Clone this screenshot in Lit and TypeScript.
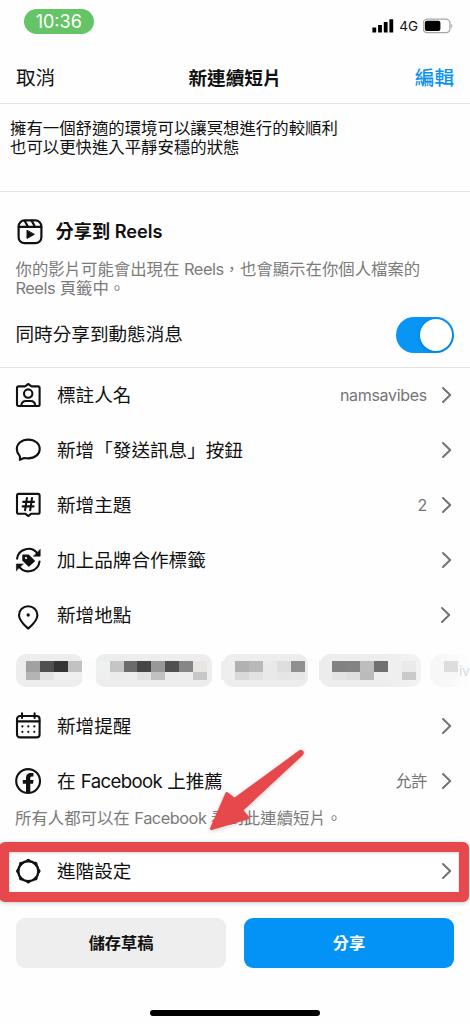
import { LitElement, html, css, svg } from "lit";
import { customElement, property } from "lit/decorators.js";

const icons: Record<string, unknown> = {
  reels: svg`<rect x="2.6" y="2.4" width="22.8" height="22.8" rx="6"/><path d="M2.8 8.9H25.2M8.6 2.8L12 8.8M15.6 2.6L19 8.8"/><path d="M11 12.6V20.4L18 16.5Z" fill="currentColor" stroke-width="1"/>`,
  tag: svg`<path d="M4.6 5.4H10.8C12.3 5.4 12.8 3.4 14.3 3.1C15.8 3.4 16.3 5.4 17.8 5.4H24Q25.6 5.4 25.6 7V23.4Q25.6 25 24 25H4.6Q3 25 3 23.4V7Q3 5.4 4.6 5.4Z"/><circle cx="14.2" cy="12.6" r="4.2"/><path d="M7.3 24.6C7.5 21.6 9.2 20 12 20H16.6C19.4 20 21.1 21.6 21.3 24.6"/>`,
  message: svg`<path d="M5.3 19.2C3.7 17.6 2.8 15.4 2.8 13C2.8 7.6 7.8 3.6 14.3 3.6C20.8 3.6 25.7 7.6 25.7 12.9C25.7 18.3 20.8 22.4 14.3 22.4C12.8 22.4 11.4 22.3 10.2 22L5.8 23.8Q6.6 21 5.3 19.2Z"/>`,
  topic: svg`<path d="M4.6 2.9H24Q25.6 2.9 25.6 4.5V21.2Q25.6 22.8 24 22.8H17.4C16.2 22.8 15.7 24.7 14.3 24.9C12.9 24.7 12.4 22.8 11.2 22.8H4.6Q3 22.8 3 21.2V4.5Q3 2.9 4.6 2.9Z"/><path d="M12.9 7.1L11.1 19.2M18 7.1L16.2 19.2M9.2 10.9H20M8.7 15.4H19.5"/>`,
  brand: svg`<path d="M3.1 12.6A11.3 11.3 0 0 1 23.6 7.8M25.5 15.6A11.3 11.3 0 0 1 5 20.4"/><path d="M26.2 3.6V10.2H19.6ZM2.4 24.6V18H9Z" fill="currentColor" stroke-width="0.6"/><path fill="currentColor" stroke-width="1.2" fill-rule="evenodd" d="M8.9 9.2L14.6 9.2L20.3 15L14.8 20L8.9 14.4ZM10.8 12a1.2 1.2 0 1 0 2.4 0a1.2 1.2 0 1 0-2.4 0Z"/><circle cx="12" cy="12" r="1.1" fill="#fff" stroke="none"/>`,
  place: svg`<path d="M14.2 27.6C11.6 25.2 5 19.8 5 14.2A9.2 9 0 0 1 23.4 14.2C23.4 19.8 16.8 25.2 14.2 27.6Z"/><circle cx="14.2" cy="14" r="1.7" fill="currentColor" stroke="none"/>`,
  calendar: svg`<rect x="3" y="4" width="22.6" height="21.4" rx="3"/><path d="M3.2 9.4H25.4M8 1.4V6M20.6 1.4V6"/><path stroke-width="2.2" d="M8.4 14.4h.01M14.3 14.4h.01M20.3 14.4h.01M8.4 19.8h.01M14.3 19.8h.01M20.3 19.8h.01"/>`,
  facebook: svg`<circle cx="14.1" cy="14" r="11.9"/><path fill="currentColor" stroke="none" d="M12 26V16.8H8.8V13.1H12V11.2C12 7.6 13.9 6 17 6C18 6 18.8 6.1 19.5 6.2V9.4H17.9C16.6 9.4 16.3 10.1 16.3 11.3V13.1H19.6L19 16.8H16.3V26Z"/>`,
  gear: svg`<circle cx="14.3" cy="14.2" r="10" stroke-width="2.3"/><g fill="currentColor" stroke="none">${[0, 45, 90, 135, 180, 225, 270, 315].map(
    (a) => svg`<path transform="rotate(${a} 14.3 14.2)" d="M9.8 5.2Q12 4.4 12.7 2.6Q14.3 1 15.9 2.6Q16.6 4.4 18.8 5.2Z"/>`
  )}</g>`,
};

const icon = (name: string) => html`<svg class="icon" viewBox="0 0 28 28" width="28" height="28">${icons[name]}</svg>`;

// Latin words sit slightly tighter than the surrounding Han text.
const mixed = (text: string) =>
  text.split(/([A-Za-z]+)/).map((part) => (/^[A-Za-z]/.test(part) ? html`<span class="latin">${part}</span>` : part));

@customElement("setting-row")
class SettingRow extends LitElement {
  @property() icon = "";
  @property() label = "";
  @property() value = "";

  static styles = css`
    :host {
      display: flex;
      align-items: center;
      height: 55.1px;
      padding: 0 18px 0 14px;
      box-sizing: border-box;
      color: #111;
    }
    .icon {
      flex: none;
      overflow: visible;
      fill: none;
      stroke: currentColor;
      stroke-width: 2.1;
      stroke-linecap: round;
      stroke-linejoin: round;
    }
    .label {
      flex: 1;
      margin-left: 15px;
      font-size: 18.6px;
      line-height: 28px;
      white-space: nowrap;
    }
    .latin { letter-spacing: -0.65px; }
    .value {
      font-size: 16px;
      line-height: 24px;
      letter-spacing: -0.3px;
      color: #757575;
      margin-right: 14px;
    }
    .chevron {
      flex: none;
      fill: none;
      stroke: #737373;
      stroke-width: 2;
      stroke-linecap: round;
      stroke-linejoin: round;
    }
  `;

  render() {
    return html`
      ${icon(this.icon)}
      <span class="label">${mixed(this.label)}</span>
      ${this.value ? html`<span class="value">${this.value}</span>` : ""}
      <svg class="chevron" viewBox="0 0 11 18" width="11" height="18"><path d="M2 2L9.2 9L2 16" /></svg>
    `;
  }
}

// Each entry: column index, upper shade, lower shade.
const mosaic: [number, string, string][] = [
  [0, "#a0a2a1", "#b4b4b4"], [1, "#505050", "#e3e3e3"], [2, "#353535", "#eeefef"], [3, "#c1c3c2", "#eeefef"],
  [4, "#fcfcfc", "#fcfcfc"], [5, "#eff1f1", "#efefef"], [6, "#c4c6c5", "#ebebeb"], [7, "#6b6b6b", "#ededed"],
  [8, "#464646", "#e2e2e2"], [9, "#989898", "#c1c1c1"], [10, "#505050", "#ebebeb"], [11, "#868686", "#ededed"],
  [12, "#e7e6e2", "#c7c7c7"], [14, "#eeeeee", "#eeeeee"], [15, "#b1b1b1", "#d9d9d9"], [16, "#b9b9b9", "#e2e2e2"],
  [17, "#e9e9e9", "#e9e9e9"], [18, "#dedede", "#e5e5e5"], [19, "#8e9190", "#e6e6e6"], [21, "#ececec", "#ececec"],
  [22, "#818181", "#e3e3e3"], [23, "#838383", "#dfdfdf"], [24, "#bdbdbd", "#bbbbbb"], [25, "#707070", "#eeeeee"],
  [26, "#efefef", "#efefef"], [27, "#eaeaea", "#cacaca"], [29, "#f6f8f7", "#f6f8f7"], [30, "#dddddd", "#f7f7f7"],
];

@customElement("app-root")
class AppRoot extends LitElement {
  static styles = css`
    :host {
      display: flex;
      flex-direction: column;
      position: relative;
      width: 470px;
      height: 1024px;
      overflow: hidden;
      box-sizing: border-box;
      background: #fefefe;
      color: #111;
      font-family: Inter, "Noto Sans CJK TC", sans-serif;
    }
    .status {
      display: flex;
      justify-content: space-between;
      height: 52px;
      padding: 9px 16px 0 24px;
      box-sizing: border-box;
    }
    .time {
      width: 69.5px;
      height: 25px;
      border-radius: 13px;
      background: #65c466;
      color: #fff;
      font-size: 18px;
      line-height: 25px;
      text-align: center;
    }
    .signals {
      display: flex;
      align-items: center;
      height: 34px;
      font-size: 13.5px;
      gap: 5px;
    }
    .header {
      display: grid;
      grid-template-columns: 1fr auto 1fr;
      align-items: center;
      height: 52px;
      padding: 0 16px;
      box-sizing: border-box;
      border-bottom: 1px solid #e3e3e3;
      font-size: 19.6px;
      line-height: 28px;
    }
    .title { font-size: 18.6px; font-weight: 700; }
    .edit { color: #0c92f2; font-weight: 500; text-align: right; }
    .caption {
      height: 87.5px;
      padding: 15px 10px 0;
      box-sizing: border-box;
      border-bottom: 1px solid #e3e3e3;
      font-size: 16.4px;
      line-height: 19px;
    }
    .share {
      display: flex;
      flex-direction: column;
      height: 176px;
      box-sizing: border-box;
      padding: 26px 16px 0 15.5px;
      border-bottom: 1px solid #e3e3e3;
    }
    .share-title {
      display: flex;
      align-items: center;
      gap: 12px;
      height: 28px;
      font-size: 18.2px;
      line-height: 26px;
      font-weight: 600;
    }
    .share-title span { margin-bottom: 2px; }
    .icon {
      flex: none;
      fill: none;
      stroke: currentColor;
      stroke-width: 2.2;
      stroke-linecap: round;
      stroke-linejoin: round;
    }
    .hint {
      margin-top: 14.5px;
      font-size: 16.4px;
      line-height: 19px;
      color: #7b7b7b;
      white-space: nowrap;
    }
    .latin { letter-spacing: -0.5px; }
    .feed {
      display: flex;
      align-items: center;
      justify-content: space-between;
      margin-top: 19px;
      height: 36px;
      font-size: 18.6px;
      line-height: 28px;
    }
    .feed > span { margin-bottom: 3px; }
    .toggle {
      display: flex;
      justify-content: flex-end;
      width: 58.5px;
      height: 36px;
      padding: 2px;
      box-sizing: border-box;
      border-radius: 18px;
      background: #0895f6;
    }
    .knob {
      width: 32px;
      height: 32px;
      border-radius: 50%;
      background: #fff;
      box-shadow: 0 1px 4px rgba(0, 0, 0, 0.2);
    }
    .chips {
      position: relative;
      display: flex;
      height: 55px;
      padding: 11px 0 0 16px;
      gap: 11.5px;
      box-sizing: border-box;
    }
    .chip {
      flex: none;
      height: 33.5px;
      border-radius: 10px;
      background: #ededed;
    }
    .c1 { width: 67px; }
    .c2 { width: 117px; }
    .c3 { width: 85px; }
    .c4 { width: 101px; background: linear-gradient(90deg, #ededed 60%, #f3f3f3); }
    .c5 {
      width: 39px;
      border-radius: 10px 0 0 10px;
      background: linear-gradient(90deg, #f5f5f5, #fefefe);
      color: #d8d8d8;
      font-size: 13px;
      line-height: 35px;
      text-indent: 27px;
      white-space: nowrap;
    }
    .mosaic { position: absolute; left: 0; top: 0; }
    .note {
      height: 34px;
      padding: 1px 0 0 15px;
      box-sizing: border-box;
      font-size: 16.4px;
      line-height: 19px;
      color: #7b7b7b;
    }
    .advanced {
      width: 470px;
      height: 60px;
      margin-left: -1px;
      box-sizing: border-box;
      border: 10px solid #e6484b;
      border-radius: 6px;
      background: #fff;
      box-shadow: 0 1px 4px rgba(0, 0, 0, 0.22), inset 0 1px 3px rgba(0, 0, 0, 0.18);
      display: flex;
      align-items: center;
    }
    .advanced setting-row { flex: 1; height: 40px; padding: 0 7px 2px 5px; }
    .actions {
      display: grid;
      grid-template-columns: 1fr 1fr;
      gap: 18px;
      margin: 15.5px 16px 0;
    }
    .action {
      height: 50.5px;
      border-radius: 9px;
      background: #eee;
      font-size: 16.2px;
      line-height: 50px;
      font-weight: 700;
      text-align: center;
    }
    .primary { background: #0393f6; color: #fff; }
    .home {
      width: 170px;
      height: 6px;
      margin: 42px auto 0;
      border-radius: 3px;
      background: #000;
    }
    .arrow { position: absolute; left: 200px; top: 740px; overflow: visible; filter: drop-shadow(0 1px 2px rgba(0, 0, 0, 0.2)); }
    .place { padding: 0 19px 0 14px; }
  `;

  render() {
    return html`
      <div class="status">
        <div class="time">10:36</div>
        <div class="signals">
          <svg width="22" height="14" viewBox="0 0 22 14">
            <path d="M.4 8.4h3.8v5H.4zM6.1 6h3.8v7.4H6.1zM11.8 3.1h3.8v10.3h-3.8zM17.4.3h3.8v13.1h-3.8z" />
          </svg>
          <span>4G</span>
          <svg width="31" height="16" viewBox="0 0 31 16">
            <rect x="0.2" y="1.2" width="26.8" height="13.4" rx="4" fill="none" stroke="#a5a5a5" stroke-width="1.3" />
            <rect x="1.8" y="2.8" width="15.6" height="10.2" rx="2" />
            <path d="M28.4 5.6q2 2.3 0 4.6z" fill="#999" />
          </svg>
        </div>
      </div>
      <div class="header">
        <span>取消</span><span class="title">新連續短片</span><span class="edit">編輯</span>
      </div>
      <div class="caption">擁有一個舒適的環境可以讓冥想進行的較順利<br />也可以更快進入平靜安穩的狀態</div>
      <div class="share">
        <div class="share-title">${icon("reels")}<span>分享到 Reels</span></div>
        <div class="hint">${mixed("你的影片可能會出現在 Reels，也會顯示在你個人檔案的")}<br />${mixed("Reels 頁籤中。")}</div>
        <div class="feed"><span>同時分享到動態消息</span><div class="toggle"><div class="knob"></div></div></div>
      </div>
      <setting-row icon="tag" label="標註人名" value="namsavibes"></setting-row>
      <setting-row icon="message" label="新增「發送訊息」按鈕"></setting-row>
      <setting-row icon="topic" label="新增主題" value="2"></setting-row>
      <setting-row icon="brand" label="加上品牌合作標籤"></setting-row>
      <setting-row class="place" icon="place" label="新增地點"></setting-row>
      <div class="chips">
        <div class="chip c1"></div>
        <div class="chip c2"></div>
        <div class="chip c3"></div>
        <div class="chip c4"></div>
        <div class="chip c5">iv</div>
        <svg class="mosaic" width="470" height="55" shape-rendering="crispEdges">
          ${mosaic.map(([i, top, low]) => {
            const x = 26 + i * 13.93;
            return svg`<rect x=${x} y="17.5" width="13.93" height="11" fill=${top}/><rect x=${x} y="28.5" width="13.93" height="8" fill=${low}/>`;
          })}
        </svg>
      </div>
      <setting-row icon="calendar" label="新增提醒"></setting-row>
      <setting-row icon="facebook" label="在 Facebook 上推薦" value="允許"></setting-row>
      <div class="note">${mixed("所有人都可以在 Facebook 看到此連續短片。")}</div>
      <div class="advanced"><setting-row icon="gear" label="進階設定"></setting-row></div>
      <div class="actions">
        <div class="action">儲存草稿</div>
        <div class="action primary">分享</div>
      </div>
      <div class="home"></div>
      <svg class="arrow" width="106" height="94" viewBox="0 0 106 94">
        <path d="M11.5 88.5L26.8 53.5L34.5 59.5L100.5 11.3Q103 11.5 102 13.8L41.5 70.2L47.8 77.8Z" fill="#e6484b" stroke="#e6484b" stroke-width="3" stroke-linejoin="round" />
      </svg>
    `;
  }
}
